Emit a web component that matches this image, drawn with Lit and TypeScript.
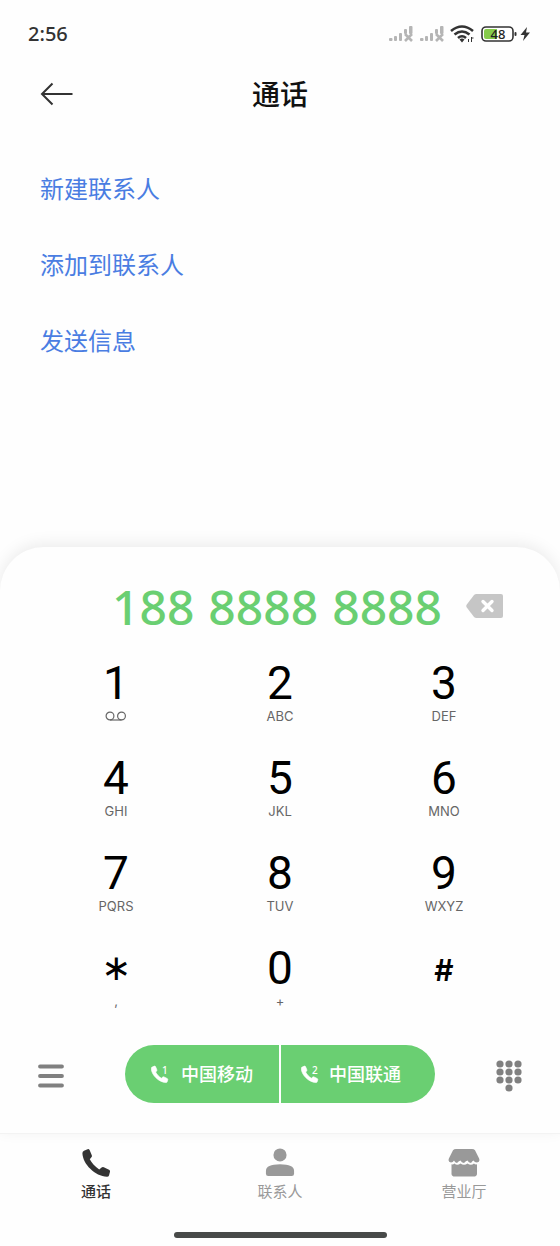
import { LitElement, html, css, svg, nothing } from "lit";
import { customElement, property } from "lit/decorators.js";

const HANDSET =
  "M2 1.8L5.600 .2Q6.800 -.3 7.600 1L9.800 6.200Q10.200 7.400 9.400 8.300L7.800 10.200C9.400 13.600 12.800 17.400 17.200 20.400L19.600 18.400Q20.600 17.600 21.800 18.200L27 20.800Q28.300 21.500 28 22.800L27 26.400Q26.600 27.700 25 27.700C13 27.200 .8 15 .4 4.200Q.4 2.500 2 1.800Z";

@customElement("status-bar")
export class StatusBar extends LitElement {
  static styles = css`
    :host {
      display: flex;
      align-items: center;
      justify-content: space-between;
      height: 24px;
      padding: 22px 29px 0 28px;
      color: #333;
    }
    .clock {
      font-size: 20px;
      line-height: 24px;
      font-weight: 500;
    }
    .icons {
      display: flex;
      align-items: center;
      gap: 6px;
    }
    svg {
      display: block;
    }
  `;

  private signal() {
    return html`<svg width="25" height="18" viewBox="0 0 25 18" fill="#b5b5b5">
      <rect x="1" y="13" width="3.500" height="3" rx="1" />
      <rect x="6" y="11" width="3" height="5" rx="1" />
      <rect x="11" y="8" width="3" height="8" rx="1" />
      <rect x="16" y="4" width="3" height="5" rx="1" />
      <rect x="21" y="1" width="3.500" height="8" rx="1" />
      <path d="M17 9L24 16M24 9L17 16" stroke="#b5b5b5" stroke-width="2.600" />
    </svg>`;
  }

  render() {
    return html`
      <span class="clock">2:56</span>
      <div class="icons">
        ${this.signal()} ${this.signal()}
        <svg width="25" height="18" viewBox="0 0 25 18" fill="none" stroke="#333" stroke-width="2.600">
          <path d="M1 6Q12 -3 23 6M4.500 9.500Q12 3.500 19.500 9.500M8 13Q12 9.500 16 13" />
          <path d="M9.500 14.500Q12 12.500 14.500 14.500L12 17.500Z" fill="#333" stroke="none" />
          <path d="M18.500 14v3M21.500 12v5M21.500 13h2" stroke-width="1" />
        </svg>
        <svg width="50" height="18" viewBox="0 0 50 18">
          <rect x="1" y="2" width="31" height="14" rx="4" fill="#fff" stroke="#333" stroke-width="1.600" />
          <path d="M5 4H16V14H5Q3 14 3 12V6Q3 4 5 4Z" fill="#86cb4b" />
          <rect x="33.500" y="7" width="2" height="4" rx="1" fill="#333" />
          <text x="17" y="13.500" text-anchor="middle" font-size="13" font-weight="500" fill="#222">48</text>
          <path d="M46 2L39.500 10H43.500L42 16L49 7.500H45Z" fill="#333" />
        </svg>
      </div>
    `;
  }
}

@customElement("dial-key")
export class DialKey extends LitElement {
  @property() digit = "";
  @property() letters = "";

  static styles = css`
    :host {
      display: block;
    }
    .key {
      display: flex;
      flex-direction: column;
      align-items: center;
      width: 100%;
      height: 95px;
      padding: 14px 0 0;
      border: 0;
      background: none;
      color: #000;
      font: inherit;
      cursor: pointer;
    }
    .digit {
      font-family: Roboto, sans-serif;
      font-size: 46px;
      line-height: 48px;
      height: 48px;
    }
    .star {
      font-family: "DejaVu Sans", sans-serif;
      font-size: 36px;
    }
    .hash {
      font-family: Inter, sans-serif;
      font-size: 30px;
      line-height: 52px;
      font-weight: 600;
    }
    .letters {
      font-family: Inter, sans-serif;
      font-size: 13px;
      line-height: 18px;
      color: #666;
    }
    .voicemail {
      display: block;
      margin-top: 4px;
    }
  `;

  render() {
    const star = this.digit === "*";
    const kind = star ? "star" : this.digit === "#" ? "hash" : "";
    return html`<button class="key" type="button">
      <span class="digit ${kind}">${star ? "∗" : this.digit}</span>
      ${this.digit === "1"
        ? html`<svg class="voicemail" width="22" height="10" viewBox="0 0 22 10" fill="none" stroke="#666" stroke-width="1.200" role="img" aria-label="语音信箱">
            <circle cx="5" cy="5" r="3.900" />
            <circle cx="16.500" cy="5" r="3.900" />
            <path d="M5 9H16.500" />
          </svg>`
        : html`<span class="letters">${this.letters || nothing}</span>`}
    </button>`;
  }
}

@customElement("app-root")
export class AppRoot extends LitElement {
  static styles = css`
    :host {
      display: flex;
      flex-direction: column;
      min-height: 100vh;
      background: #fefefe;
      color: #111;
      font-family: "Noto Sans", "Noto Sans CJK SC", sans-serif;
    }
    svg {
      display: block;
    }
    button {
      border: 0;
      padding: 0;
      background: none;
      color: inherit;
      font: inherit;
      cursor: pointer;
    }
    a {
      text-decoration: none;
    }
    .header {
      display: grid;
      grid-template-columns: 1fr auto 1fr;
      align-items: center;
      padding: 28px 40px 0;
    }
    .header h1 {
      margin: 0;
      font-size: 28px;
      line-height: 40px;
      font-weight: 500;
    }
    .options {
      flex: 1;
      margin: 0;
      padding: 37px 40px 0;
      list-style: none;
    }
    .option {
      color: #4a7de2;
      font-size: 24px;
      line-height: 36px;
      padding: 20px 0;
      display: inline-block;
    }
    .options li {
      height: 76px;
    }
    .panel {
      border-radius: 44px 44px 0 0;
      background: #fefefe;
      box-shadow: 0 -3px 16px rgba(0, 0, 0, 0.08);
      padding-top: 30px;
    }
    .entry {
      display: flex;
      align-items: center;
      justify-content: flex-end;
      gap: 24px;
      height: 60px;
      padding-right: 57px;
      margin-bottom: 8px;
    }
    .number {
      display: flex;
      gap: 14px;
      color: #6acf72;
      font-size: 48px;
      line-height: 58px;
      font-weight: 500;
    }
    .keys {
      display: grid;
      grid-template-columns: repeat(3, 1fr);
      padding: 0 34px;
    }
    .actions {
      display: flex;
      align-items: center;
      justify-content: space-between;
      padding: 20px 38px 30px;
    }
    .side {
      padding-top: 3px;
    }
    .calls {
      display: grid;
      grid-template-columns: 1fr 1fr;
      gap: 2px;
      width: 310px;
      height: 58px;
      border-radius: 29px;
      overflow: hidden;
    }
    .call {
      display: flex;
      align-items: center;
      gap: 8px;
      padding-left: 20px;
      background: #6acf72;
      color: #fff;
      font-size: 18px;
      line-height: 26px;
      font-weight: 500;
    }
    .call:first-child {
      gap: 10px;
      padding-left: 26px;
    }
    .tabs {
      display: grid;
      grid-template-columns: repeat(3, 1fr);
      border-top: 1px solid #f3f3f3;
      padding: 13px 4px 0;
    }
    .tab {
      display: flex;
      flex-direction: column;
      align-items: center;
      gap: 2px;
      color: #999;
      font-size: 15px;
      line-height: 24px;
    }
    .tab.current {
      color: #333;
      font-weight: 500;
    }
    .home {
      width: 213px;
      height: 6px;
      margin: 29px auto 8px;
      border-radius: 3px;
      background: #484a49;
    }
  `;

  private keys = [
    ["1", ""], ["2", "ABC"], ["3", "DEF"],
    ["4", "GHI"], ["5", "JKL"], ["6", "MNO"],
    ["7", "PQRS"], ["8", "TUV"], ["9", "WXYZ"],
    ["*", ","], ["0", "+"], ["#", ""],
  ];

  private call(slot: string, carrier: string) {
    return html`<button class="call" type="button">
      <svg width="20" height="20" viewBox="0 0 20 20" fill="#fff">
        <g transform="translate(0 2) scale(.6)"><path d=${HANDSET} stroke="#fff" /></g>
        <text x="11" y="9.500" font-size="10" font-weight="500">${slot}</text>
      </svg>
      <span>${carrier}</span>
    </button>`;
  }

  private dots = [[4, 4], [13, 4], [22, 4], [4, 12], [13, 12], [22, 12], [4, 20], [13, 20], [22, 20], [13, 28]];

  render() {
    return html`
      <status-bar></status-bar>
      <header class="header">
        <button type="button" aria-label="返回">
          <svg width="34" height="24" viewBox="0 0 34 24" fill="none" stroke="#333" stroke-width="2">
            <path d="M12.500 1.500L2 12L12.500 22.500M2 12H32.500" />
          </svg>
        </button>
        <h1>通话</h1>
      </header>
      <ul class="options">
        ${["新建联系人", "添加到联系人", "发送信息"].map(
          (label) => html`<li><a class="option" href="#">${label}</a></li>`
        )}
      </ul>
      <section class="panel">
        <div class="entry">
          <output class="number"><span>188</span><span>8888</span><span>8888</span></output>
          <button type="button" aria-label="删除">
            <svg width="37" height="26" viewBox="0 0 37 26">
              <path d="M10.500 0H35Q37 0 37 2V22Q37 24 35 24H10.500Q9 24 8 23L.8 13.500Q-.3 12 .8 10.500L8 1Q9 0 10.500 0Z" fill="#c6c6c6" />
              <path d="M17 7.500L26 16.500M26 7.500L17 16.500" stroke="#fff" stroke-width="3.400" stroke-linecap="round" />
            </svg>
          </button>
        </div>
        <div class="keys">
          ${this.keys.map(([d, l]) => html`<dial-key .digit=${d} .letters=${l}></dial-key>`)}
        </div>
        <div class="actions">
          <button class="side" type="button" aria-label="菜单">
            <svg width="26" height="24" viewBox="0 0 26 24" stroke="#808080" stroke-width="3.800" stroke-linecap="round">
              <path d="M2 2.500H24M2 12H24M2 21.500H24" />
            </svg>
          </button>
          <div class="calls">${this.call("1", "中国移动")}${this.call("2", "中国联通")}</div>
          <button class="side" type="button" aria-label="收起键盘">
            <svg width="26" height="32" viewBox="0 0 26 32" fill="#808080">
              ${this.dots.map(([x, y]) => svg`<circle cx=${x} cy=${y} r="3.600" />`)}
            </svg>
          </button>
        </div>
      </section>
      <nav class="tabs">
        <a class="tab current" href="#">
          <svg width="28" height="30" viewBox="0 0 28 30" fill="#333"><g transform="translate(0 2)"><path d=${HANDSET} /></g></svg>
          <span>通话</span>
        </a>
        <a class="tab" href="#">
          <svg width="30" height="30" viewBox="0 0 30 32" fill="#999">
            <circle cx="15" cy="8.500" r="7" />
            <path d="M0 25.500Q0 18.500 15 18.500Q30 18.500 30 25.500V28.500Q30 31 27.500 31H2.500Q0 31 0 28.500Z" />
          </svg>
          <span>联系人</span>
        </a>
        <a class="tab" href="#">
          <svg width="32" height="30" viewBox="0 0 32 32" preserveAspectRatio="none" fill="#999">
            <path d="M8 2H24Q26 2 27 3.500L31 12Q32.500 16 29 16.500Q26.500 16.500 25.500 14.500Q24.500 15 23 17Q20.500 17 19.500 14.500Q18 15 16 17Q13.500 17 12.500 14.500Q11 15 9 17Q7 17 6 14.500Q5 16.500 3 16.500Q-.5 16 1 12L5 3.500Q6 2 8 2Z" />
            <path d="M3.500 18.500Q5 19 6.500 17.500Q9 20.500 12.500 17.500Q16 20.500 19.500 17.500Q23 20.500 26 17.500Q27 19 29 18.500V28.500Q29 31.500 25.500 31.500H7Q3.500 31.500 3.500 28.500Z" />
          </svg>
          <span>营业厅</span>
        </a>
      </nav>
      <div class="home"></div>
    `;
  }
}
